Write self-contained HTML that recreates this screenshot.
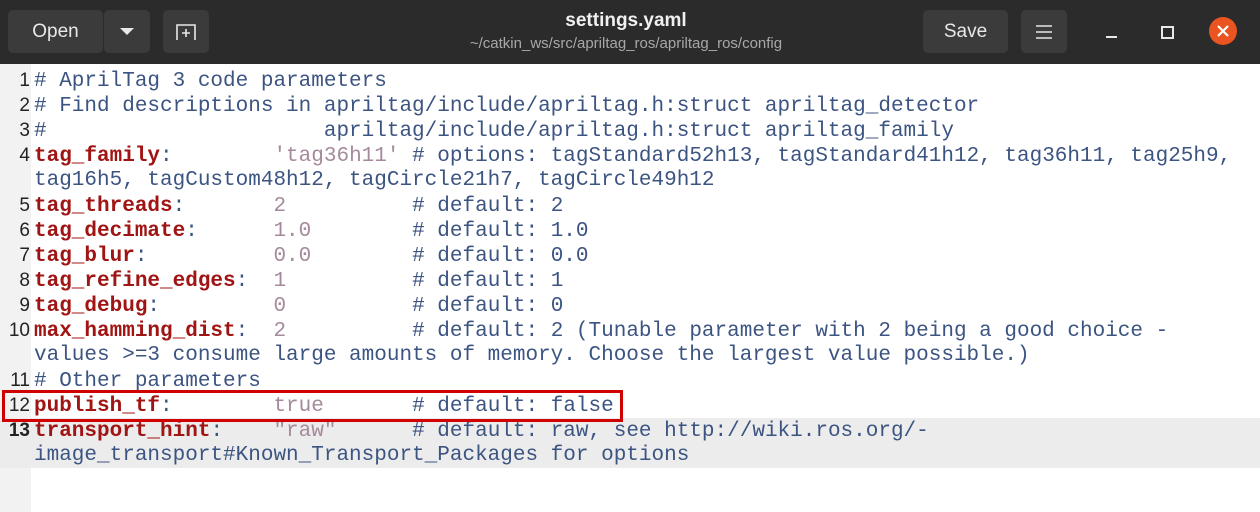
<!DOCTYPE html>
<html><head><style>
body{margin:0;width:1260px;height:512px;overflow:hidden;background:#fff;font-family:"Liberation Sans",sans-serif;position:relative}
.hdr{position:absolute;left:0;top:0;width:1260px;height:64px;background:#2b2b2b}
.btn{position:absolute;top:10px;height:43px;background:#3b3b3b;border-radius:5px;color:#e8e8e8;font-size:19px;line-height:43px;text-align:center}
.ttl{position:absolute;left:0;width:1252px;text-align:center;color:#f0f0f0}
.gut{position:absolute;left:0;top:64px;width:31px;height:448px;background:#f2f2f2}
.cur{position:absolute;left:0;top:418px;width:1260px;height:50px;background:#ececec}
.code{position:absolute;left:0;top:68px;font-family:"Liberation Mono",monospace;font-size:21px;color:#3c5482}
.r{display:block;height:25px;line-height:25px;white-space:pre}
.n{display:inline-block;width:30px;text-align:right;color:#222;margin-right:4px;font-family:"Liberation Sans",sans-serif;font-size:19px}
.k{color:#a01414;font-weight:bold}
.v{color:#a58a9c}
.box{position:absolute;left:2px;top:390px;width:615px;height:26px;border:3px solid #d00000}
</style></head><body>
<div class="hdr"></div>
<div class="btn" style="left:8px;width:95px">Open</div>
<div class="btn" style="left:104px;width:46px"><svg width="14" height="8" style="vertical-align:middle"><path d="M0 0H14L7 7Z" fill="#e8e8e8"/></svg></div>
<div class="btn" style="left:163px;width:46px"><svg width="22" height="20" style="vertical-align:middle"><path d="M2 18V3H20V18M11 7V15M7 11H15" stroke="#e8e8e8" stroke-width="1.6" fill="none"/></svg></div>
<div class="ttl" style="top:10px;font-weight:bold;font-size:19px">settings.yaml</div>
<div class="ttl" style="top:35px;font-size:15px;color:#a8a8a8">~/catkin_ws/src/apriltag_ros/apriltag_ros/config</div>
<div class="btn" style="left:923px;width:85px">Save</div>
<div class="btn" style="left:1021px;width:46px"><svg width="16" height="14" style="vertical-align:middle"><path d="M0 1H16M0 7H16M0 13H16" stroke="#e8e8e8" stroke-width="1.6"/></svg></div>
<div style="position:absolute;left:1106px;top:36px;width:11px;height:2px;background:#e8e8e8"></div>
<div style="position:absolute;left:1161px;top:26px;width:9px;height:9px;border:2px solid #e8e8e8"></div>
<div style="position:absolute;left:1209px;top:17px;width:28px;height:28px;border-radius:50%;background:#e95420"><svg width="28" height="28"><path d="M9 9L19 19M19 9L9 19" stroke="#fff" stroke-width="2.2"/></svg></div>
<div class="gut"></div>
<div class="cur"></div>
<div class="code"><span class="r"><span class="n">1</span># AprilTag 3 code parameters</span><span class="r"><span class="n">2</span># Find descriptions in apriltag/include/apriltag.h:struct apriltag_detector</span><span class="r"><span class="n">3</span>#                      apriltag/include/apriltag.h:struct apriltag_family</span><span class="r"><span class="n">4</span><span class="k">tag_family</span>:        <span class="v">'tag36h11'</span> # options: tagStandard52h13, tagStandard41h12, tag36h11, tag25h9,</span><span class="r"><span class="n"></span>tag16h5, tagCustom48h12, tagCircle21h7, tagCircle49h12</span><span class="r"><span class="n">5</span><span class="k">tag_threads</span>:       <span class="v">2</span>          # default: 2</span><span class="r"><span class="n">6</span><span class="k">tag_decimate</span>:      <span class="v">1.0</span>        # default: 1.0</span><span class="r"><span class="n">7</span><span class="k">tag_blur</span>:          <span class="v">0.0</span>        # default: 0.0</span><span class="r"><span class="n">8</span><span class="k">tag_refine_edges</span>:  <span class="v">1</span>          # default: 1</span><span class="r"><span class="n">9</span><span class="k">tag_debug</span>:         <span class="v">0</span>          # default: 0</span><span class="r"><span class="n">10</span><span class="k">max_hamming_dist</span>:  <span class="v">2</span>          # default: 2 (Tunable parameter with 2 being a good choice -</span><span class="r"><span class="n"></span>values >=3 consume large amounts of memory. Choose the largest value possible.)</span><span class="r"><span class="n">11</span># Other parameters</span><span class="r"><span class="n">12</span><span class="k">publish_tf</span>:        <span class="v">true</span>       # default: false</span><span class="r"><span class="n" style="font-weight:bold">13</span><span class="k">transport_hint</span>:    <span class="v">"raw"</span>      # default: raw, see http://wiki.ros.org/-</span><span class="r"><span class="n"></span>image_transport#Known_Transport_Packages for options</span></div>
<div class="box"></div>
</body></html>
